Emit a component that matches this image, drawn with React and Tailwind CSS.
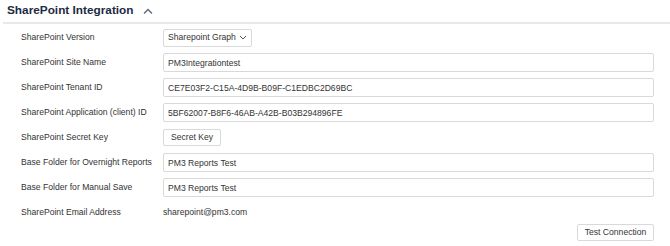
import { useState } from "react"

const rows = [
    { label: "SharePoint Site Name", value: "PM3Integrationtest" },
    { label: "SharePoint Tenant ID", value: "CE7E03F2-C15A-4D9B-B09F-C1EDBC2D69BC" },
    { label: "SharePoint Application (client) ID", value: "5BF62007-B8F6-46AB-A42B-B03B294896FE" },
]

const folders = [
    { label: "Base Folder for Overnight Reports", value: "PM3 Reports Test" },
    { label: "Base Folder for Manual Save", value: "PM3 Reports Test" },
]

const Label = ({ children }) => (
    <div className="w-[142px] shrink-0 whitespace-nowrap text-[8.6px] text-[#333]">{children}</div>
)

const Field = ({ label, value }) => (
    <div className="flex items-center h-[25px]">
        <Label>{label}</Label>
        <input
            defaultValue={value}
            className="h-[19px] flex-1 border border-[#d9d9d9] rounded-[2px] px-[4px] text-[8.6px] text-[#333] outline-none"
        />
    </div>
)

export default function App() {
    const [open, setOpen] = useState(true)

    return (
        <div className="w-[670px] h-[246px] bg-white font-[Liberation_Sans,Arial,sans-serif] overflow-hidden">
            <div className="flex items-center h-[24px] pl-[4px] pb-[1px] border-b-2 border-[#e8e8e8] ml-[3px]">
                <span className="text-[11.8px] font-bold text-[#1c2a43] whitespace-nowrap">SharePoint Integration</span>
                <button onClick={() => setOpen(!open)} className="ml-[9px] text-[#5b6678]">
                    <svg width="10" height="6" viewBox="0 0 10 6" fill="none" stroke="currentColor" strokeWidth="1.3">
                        <path d="M1 5.5 L5 1.5 L9 5.5" />
                    </svg>
                </button>
            </div>

            {open && (
                <div className="pl-[21px] pr-[16px] pt-[1px]">
                    <div className="flex items-center h-[25px]">
                        <Label>SharePoint Version</Label>
                        <button className="h-[18px] flex items-center gap-[3px] border border-[#d9d9d9] rounded-[2px] pl-[4px] pr-[4px] text-[8.6px] text-[#333] whitespace-nowrap">
                            Sharepoint Graph
                            <svg width="8" height="5" viewBox="0 0 8 5" fill="none" stroke="#555" strokeWidth="1">
                                <path d="M1 1 L4 4 L7 1" />
                            </svg>
                        </button>
                    </div>
                    {rows.map((r, i) => <Field key={i} label={r.label} value={r.value} />)}
                    <div className="flex items-center h-[25px]">
                        <Label>SharePoint Secret Key</Label>
                        <button className="h-[17px] w-[58px] border border-[#d9d9d9] rounded-[2px] text-[8.6px] text-[#333] whitespace-nowrap">Secret Key</button>
                    </div>
                    {folders.map((r, i) => <Field key={i} label={r.label} value={r.value} />)}
                    <div className="flex items-center h-[24px]">
                        <Label>SharePoint Email Address</Label>
                        <span className="text-[8.6px] text-[#333] whitespace-nowrap">sharepoint@pm3.com</span>
                    </div>
                    <div className="flex justify-end">
                        <button className="h-[17px] w-[77px] border border-[#d9d9d9] rounded-[2px] text-[8.6px] text-[#333] whitespace-nowrap">Test Connection</button>
                    </div>
                </div>
            )}
        </div>
    )
}
